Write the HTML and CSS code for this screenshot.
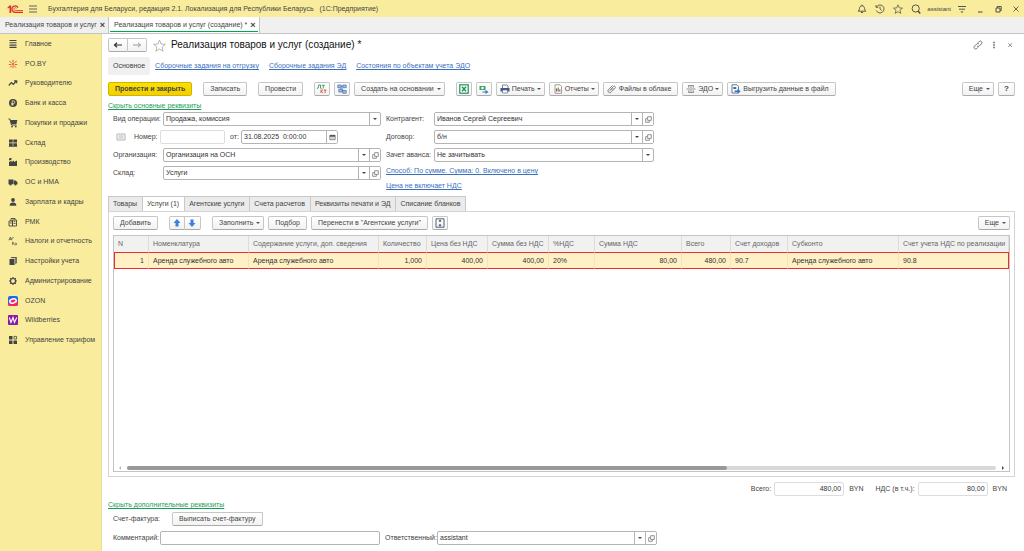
FILE: index.html
```html
<!DOCTYPE html>
<html lang="ru">
<head>
  <meta charset="UTF-8" />
  <meta name="viewport" content="width=device-width, initial-scale=1" />
  <title>Реализация товаров и услуг (создание)</title>
  <link rel="stylesheet" href="styles.css">
</head>
<body>
  <!-- shared icons -->
  <svg class="sprite" aria-hidden="true">
    <symbol id="i-open" viewBox="0 0 8 8"><path d="M3 .8h4.200V5H3zM2.500 3H.8v4.200H5V5.500" fill="none" stroke="#666" stroke-width=".8"/></symbol>
    <symbol id="i-star" viewBox="0 0 24 24"><path d="M12 2l3 7.300 7.800.6-6 5 1.900 7.600L12 18.400l-6.700 4.100 1.900-7.600-6-5 7.800-.6z" fill="none" stroke="currentColor" stroke-width="1.600" stroke-linejoin="round"/></symbol>
  </svg>

  <header class="titlebar">
    <svg class="logo" viewBox="0 0 16 8" aria-hidden="true">
      <path d="M.3 2.700L2.600.5h1.600V8H2.500V2.600L.9 3.600z" fill="#dc2f2b"/>
      <path d="M11 2.600A3.200 3.200 0 1 0 8.300 7.300H16" fill="none" stroke="#dc2f2b" stroke-width="1.300"/>
      <path d="M9.600 3.300A1.400 1.400 0 1 0 8.400 5.500H16" fill="none" stroke="#dc2f2b" stroke-width=".8"/>
    </svg>
    <button class="plain" aria-label="Меню"><svg viewBox="0 0 10 10"><path d="M1 2h8M1 5h8M1 8h8" stroke="#555" stroke-width=".9"/></svg></button>
    <span class="app-name">Бухгалтерия для Беларуси, редакция 2.1. Локализация для Республики Беларусь &nbsp; (1С:Предприятие)</span>
    <div class="title-tools">
      <div class="tool-set">
        <button class="plain" aria-label="Уведомления"><svg viewBox="0 0 10 10"><path d="M1.200 7.200h7.600C7.500 6 7.800 5 7.300 3.500 7 2.200 6 1.800 5 1.800S3 2.200 2.700 3.500C2.200 5 2.500 6 1.200 7.200zM5 .8v1M4 8.500h2" fill="none" stroke="#444" stroke-width=".9"/></svg></button>
        <button class="plain" aria-label="История"><svg viewBox="0 0 10 10"><path d="M1.500 3A4 4 0 1 1 1.300 6.500M1 1v2.300h2.300M5 2.500V5l1.800 1.500" fill="none" stroke="#444" stroke-width=".8"/></svg></button>
        <button class="plain" aria-label="Избранное"><svg><use href="#i-star"/></svg></button>
        <button class="plain" aria-label="Поиск"><svg viewBox="0 0 10 10"><circle cx="4.700" cy="4.500" r="3.600" fill="none" stroke="#444" stroke-width=".9"/><path d="M7 7l2.300 2.500" stroke="#444" stroke-width="1.300"/></svg></button>
      </div>
      <span class="user">assistant</span>
      <div class="tool-set">
        <button class="plain" aria-label="Настройки"><svg viewBox="0 0 10 10"><path d="M1 2.500h8M2 5.200h6" stroke="#444" stroke-width=".9"/><path d="M3.500 7.500h3L5 9z" fill="#444"/></svg></button>
        <button class="plain" aria-label="Свернуть"><svg viewBox="0 0 10 10"><path d="M3 8h4.500" stroke="#444"/></svg></button>
        <button class="plain" aria-label="Восстановить"><svg viewBox="0 0 10 10"><path d="M3 4h4v4H3zM4.200 4V2.500h4v4H7" fill="none" stroke="#444" stroke-width=".9"/></svg></button>
        <button class="plain" aria-label="Выход"><svg viewBox="0 0 10 10"><path d="M2.500 2.500l5 5m0-5l-5 5" stroke="#444" stroke-width=".8"/></svg></button>
      </div>
    </div>
  </header>

  <nav class="windows">
    <a href="#" class="win">Реализация товаров и услуг <b>×</b></a>
    <a href="#" class="win active">Реализация товаров и услуг (создание) * <b>×</b></a>
  </nav>

  <div class="workspace">
    <nav class="sidebar">
      <div class="sections">
        <a href="#"><svg viewBox="0 0 10 10"><path d="M1.500 1.500h7M1.500 3.800h7M1.500 6.100h7M1.500 8.400h7" stroke="#444" stroke-width="1.100"/></svg>Главное</a>
        <a href="#"><svg viewBox="0 0 10 10"><path d="M5 .8v2.700M5 6.500v2.700M1.300 2.200l2.300 1.600M8.700 2.200L6.400 3.800M.8 5.500h2.500M9.200 5.500H6.700M2 8.600l1.800-2M8 8.600l-1.800-2" stroke="#e0492f" stroke-width=".9"/><circle cx="5" cy="5" r="1" fill="#e0492f"/></svg>PO.BY</a>
        <a href="#"><svg viewBox="0 0 10 10"><path d="M.8 7.500l2.500-3 2 1.800 3-3.300M6 2.800h2.700v2.500" fill="none" stroke="#444" stroke-width="1.200"/></svg>Руководителю</a>
        <a href="#"><svg viewBox="0 0 10 10"><circle cx="5" cy="5" r="4" fill="#444"/><path d="M4.200 7.800V2.900h1.300a1.300 1.300 0 0 1 0 2.700H3.200M3.200 6.700h2.500" fill="none" stroke="#f9ec9c" stroke-width=".8"/></svg>Банк и касса</a>
        <a href="#"><svg viewBox="0 0 10 10"><path d="M.5 1h1.400l1.600 6h5" fill="none" stroke="#444"/><path d="M2.300 2h7L8.500 6H3.400z" fill="#444"/><circle cx="4" cy="8.600" r=".9" fill="#444"/><circle cx="7.800" cy="8.600" r=".9" fill="#444"/></svg>Покупки и продажи</a>
        <a href="#"><svg viewBox="0 0 10 10"><path d="M1 1.500h3.700v3H1zM5.300 1.500H9v3H5.300zM1 5.200h3.700V8H1zM5.300 5.200H9V8H5.300zM.8 8.300h8.400v.8H.8z" fill="#444"/></svg>Склад</a>
        <a href="#"><svg viewBox="0 0 10 10"><path d="M1 9V5l2.500-1.500V5L6 3.500V5l3-1.500V9zM1 1.500l2.500-.7v2L1 3.500z" fill="#444"/></svg>Производство</a>
        <a href="#"><svg viewBox="0 0 10 10"><path d="M.5 2.500h5v4.700h-5zM5.900 3.500h2l1.600 1.900v1.800H5.900z" fill="#444"/><circle cx="2.500" cy="7.500" r="1.100" fill="#444"/><circle cx="7.500" cy="7.500" r="1.100" fill="#444"/></svg>ОС и НМА</a>
        <a href="#"><svg viewBox="0 0 10 10"><circle cx="5" cy="3" r="1.900" fill="#444"/><path d="M1.700 8.800c0-2.200 1-3.300 3.300-3.300s3.300 1.100 3.300 3.300z" fill="#444"/></svg>Зарплата и кадры</a>
        <a href="#"><svg viewBox="0 0 10 10"><path d="M1 4h3.500v5H1zM4.500 3h4v6h-4zM3 4V1.500h4V3" fill="none" stroke="#444" stroke-width=".9"/><path d="M5.500 4.700h2M5.500 6.500h2M1.800 6h2" stroke="#444" stroke-width=".8"/></svg>РМК</a>
        <a href="#"><svg viewBox="0 0 10 10"><path d="M.8 4.300L2.300 1l1 3.300M1.200 3.300h2M3.800 4V2l2-.5M4.500 5.800v3M4.500 7.500L6 6.200M5 7.500l1.600 1.300" fill="none" stroke="#555" stroke-width=".7"/><circle cx="7.800" cy="8" r=".9" fill="none" stroke="#555" stroke-width=".7"/></svg>Налоги и отчетность</a>
        <a href="#"><svg viewBox="0 0 10 10"><path d="M1.500 3l5-.3V9h-5z" fill="#444"/><path d="M2.500 2l1-1h5.300v6L7.300 8.500V2z" fill="#555"/></svg>Настройки учета</a>
        <a href="#"><svg viewBox="0 0 10 10"><circle cx="5" cy="5" r="2.500" fill="none" stroke="#444" stroke-width="1.200"/><path d="M5 1v1.200M5 7.800V9M1 5h1.200M7.800 5H9M2.200 2.200l.9.900M6.900 6.900l.9.900M7.800 2.200l-.9.900M3.100 6.900l-.9.900" stroke="#444" stroke-width="1.200"/></svg>Администрирование</a>
        <a href="#"><svg viewBox="0 0 10 10"><rect width="10" height="10" rx="2" fill="#1769f5"/><path d="M0 7.500L10 5.500V8a2 2 0 0 1-2 2H2a2 2 0 0 1-2-2z" fill="#f8265c"/><ellipse cx="5" cy="5" rx="3.300" ry="2" transform="rotate(-15 5 5)" fill="#f8265c" stroke="#fff" stroke-width="1.500"/></svg>OZON</a>
        <a href="#"><svg viewBox="0 0 10 10"><rect width="10" height="10" rx="1" fill="#8b1aa0"/><path d="M1.300 2.500l1.700 5 2-5 1.500 5 2.200-5" fill="none" stroke="#fff" stroke-width="1.100"/></svg>Wildberries</a>
        <a href="#"><svg viewBox="0 0 10 10"><path d="M1 1h3.500v3.500H1zM1 5.500h3.500V9H1zM5.500 5.500H9V9H5.500z" fill="#444"/><path d="M6 1.400h2.600V4H6z" fill="none" stroke="#444" stroke-width=".8"/></svg>Управление тарифом</a>
      </div>
    </nav>

    <main class="document">
      <div class="doc-head">
        <div class="joined">
          <button class="btn" aria-label="Назад"><svg viewBox="0 0 10 10"><path d="M1.500 5h7.500M4 2.800L1.500 5 4 7.200" fill="none" stroke="#333" stroke-width="1.200"/></svg></button>
          <button class="btn" aria-label="Вперед"><svg viewBox="0 0 10 10"><path d="M1 5h7.500M6 2.800L8.500 5 6 7.200" fill="none" stroke="#999"/></svg></button>
        </div>
        <button class="plain fav" aria-label="В избранное"><svg><use href="#i-star"/></svg></button>
        <h1>Реализация товаров и услуг (создание) *</h1>
        <div class="head-tools">
          <button class="plain" aria-label="Ссылка"><svg viewBox="0 0 10 10"><path d="M4 6a1.600 1.600 0 0 0 2.300 0l2.200-2.200a1.600 1.600 0 0 0-2.300-2.300L5 2.700M6 4a1.600 1.600 0 0 0-2.300 0L1.500 6.200a1.600 1.600 0 0 0 2.300 2.300L5 7.300" fill="none" stroke="#666" stroke-width=".9"/></svg></button>
          <button class="plain" aria-label="Еще"><svg viewBox="0 0 10 10"><path d="M5 1.800v1.400M5 4.300v1.400M5 6.800v1.400" stroke="#555" stroke-width="1.400"/></svg></button>
          <button class="plain" aria-label="Закрыть"><svg viewBox="0 0 10 10"><path d="M3.300 3.300l3.700 3.700m0-3.700L3.300 7" stroke="#777" stroke-width=".8"/></svg></button>
        </div>
      </div>

      <nav class="doc-links">
        <a href="#" class="current">Основное</a>
        <a href="#">Сборочные задания на отгрузку</a>
        <a href="#">Сборочные задания ЭД</a>
        <a href="#">Состояния по объектам учета ЭДО</a>
      </nav>

      <div class="toolbar">
        <button class="btn primary">Провести и закрыть</button>
        <button class="btn">Записать</button>
        <button class="btn">Провести</button>
        <div class="group">
          <button class="btn icon" aria-label="Дт Кт"><svg viewBox="0 0 10 10"><path d="M.5 4.800V4h.6L1.700 1h1.800v3h.7v.8M4.800 1.300h3M6.300 1.300v3.200" fill="none" stroke="#2f9b62" stroke-width=".9"/><path d="M4 5.500V9M6 5.500L4.300 7.200 6.200 9M6.700 6h2.800M8.100 6v3" fill="none" stroke="#e0453a" stroke-width=".9"/></svg></button>
          <button class="btn icon" aria-label="Структура подчиненности"><svg viewBox="0 0 10 10"><path d="M3 4.500l4 3M4 2.500h2M4.500 3.500l1.500 3" stroke="#4c76b5" stroke-width=".8"/><path d="M.8 1h3.400v2.700H.8zM5.800 1h3.400v2.700H5.800zM1.800 5.300h3.400V8H1.800zM5.800 6.500h3.400v2.700H5.800z" fill="#a9c1e6" stroke="#4c76b5" stroke-width=".8"/></svg></button>
          <button class="btn drop">Создать на основании <i class="caret"></i></button>
        </div>
        <div class="group">
          <button class="btn icon" aria-label="Excel"><svg viewBox="0 0 10 10"><rect x=".8" y=".8" width="8.400" height="8.400" fill="#fff" stroke="#1f9254" stroke-width="1.200"/><path d="M3 2.700l4 4.600m0-4.600L3 7.300" stroke="#1f9254" stroke-width="1.400"/></svg></button>
          <button class="btn icon" aria-label="Отправить"><svg viewBox="0 0 10 10"><path d="M.5 2h6v4h-6z" fill="#3ba06b"/><circle cx="3.500" cy="4" r="1.300" fill="#fff"/><path d="M3.500 7.500h3V5.700l3 2.300-3 2V8.500h-3z" fill="#3579c8"/></svg></button>
          <button class="btn lead drop"><svg viewBox="0 0 10 10"><path d="M2.500 1h4.500l1 1v2.500h-5.500z" fill="#fff" stroke="#5a6a8c" stroke-width=".8"/><path d="M.5 4h9v3.500h-9z" fill="#415786"/><path d="M2.500 6h5v3h-5z" fill="#fff" stroke="#5a6a8c" stroke-width=".7"/></svg>Печать <i class="caret"></i></button>
          <button class="btn lead drop"><svg viewBox="0 0 10 10"><path d="M2 .8h5l1.500 1.500v7H2z" fill="#fff" stroke="#888" stroke-width=".8"/><path d="M3.500 4.500v3M6.800 5.500v2" stroke="#df3b33" stroke-width="1.200"/><path d="M5.200 3.500v4" stroke="#2f9b62" stroke-width="1.200"/></svg>Отчеты <i class="caret"></i></button>
          <button class="btn lead"><svg viewBox="0 0 10 10"><path d="M2.500 6.500l4-4a1.100 1.100 0 0 1 1.600 1.600L4 8.200A1.800 1.800 0 0 1 1.500 5.600l4.200-4.200M4 6.500l2.500-2.500" fill="none" stroke="#666" stroke-width=".8"/></svg>Файлы в облаке</button>
          <button class="btn lead drop"><svg viewBox="0 0 10 10"><path d="M2.500 3.500v-2h5v2M2.500 6.500v2h5v-2M.5 5h9M3.500 3h3M3.500 7h3" fill="none" stroke="#888" stroke-width=".9"/></svg>ЭДО <i class="caret"></i></button>
          <button class="btn lead"><svg viewBox="0 0 10 10"><path d="M1 .8h5l1.500 1.500V9H1z" fill="#fff" stroke="#506a94" stroke-width=".9"/><path d="M2.300 3h3v2h-3z" fill="#506a94"/><path d="M3.500 6.500h3V4.800L9.700 7.300 6.500 9.700V8h-3z" fill="#2d74c9"/></svg>Выгрузить данные в файл</button>
        </div>
        <div class="group end">
          <button class="btn drop">Еще <i class="caret"></i></button>
          <button class="btn help">?</button>
        </div>
      </div>

      <a href="#" class="toggle">Скрыть основные реквизиты</a>

      <form class="fields">
        <div class="field-col">
          <div class="row">
            <label for="operation">Вид операции:</label>
            <div class="field"><select id="operation"><option>Продажа, комиссия</option></select></div>
          </div>
          <div class="row number-row">
            <svg viewBox="0 0 10 10"><path d="M1 2h8v6H1zM2.500 4h5M2.500 6h5" fill="none" stroke="#aaa" stroke-width=".9"/></svg>
            <label for="number">Номер:</label>
            <div class="field pale"><input type="text" id="number"></div>
            <label for="date">от:</label>
            <div class="field date">
              <input type="text" id="date" value="31.08.2025  0:00:00">
              <button type="button" aria-label="Календарь"><svg viewBox="0 0 8 8"><path d="M1 1.500h6v5H1z" fill="none" stroke="#555" stroke-width=".8"/><path d="M1 1h6v2H1z" fill="#555"/><path d="M2 4.500h4" stroke="#555" stroke-width=".6"/></svg></button>
            </div>
          </div>
          <div class="row">
            <label for="org">Организация:</label>
            <div class="field"><select id="org"><option>Организация на ОСН</option></select><button type="button" aria-label="Открыть"><svg><use href="#i-open"/></svg></button></div>
          </div>
          <div class="row">
            <label for="store">Склад:</label>
            <div class="field"><select id="store"><option>Услуги</option></select><button type="button" aria-label="Открыть"><svg><use href="#i-open"/></svg></button></div>
          </div>
        </div>
        <div class="field-col second">
          <div class="row">
            <label for="partner">Контрагент:</label>
            <div class="field"><select id="partner"><option>Иванов Сергей Сергеевич</option></select><button type="button" aria-label="Открыть"><svg><use href="#i-open"/></svg></button></div>
          </div>
          <div class="row">
            <label for="contract">Договор:</label>
            <div class="field"><select id="contract"><option>б/н</option></select><button type="button" aria-label="Открыть"><svg><use href="#i-open"/></svg></button></div>
          </div>
          <div class="row">
            <label for="advance">Зачет аванса:</label>
            <div class="field"><select id="advance"><option>Не зачитывать</option></select></div>
          </div>
          <div class="price-links">
            <a href="#">Способ: По сумме. Сумма: 0. Включено в цену</a>
            <a href="#">Цена не включает НДС</a>
          </div>
        </div>
      </form>

      <div class="tabs">
        <button>Товары</button>
        <button class="active">Услуги (1)</button>
        <button>Агентские услуги</button>
        <button>Счета расчетов</button>
        <button>Реквизиты печати и ЭД</button>
        <button>Списание бланков</button>
      </div>

      <section class="panel">
        <div class="toolbar">
          <button class="btn">Добавить</button>
          <div class="joined arrows">
            <button class="btn" aria-label="Вверх"><svg viewBox="0 0 10 10"><path d="M5 1l3.500 4H6.500v3.500h-3V5h-2z" fill="#3b7fe0"/></svg></button>
            <button class="btn" aria-label="Вниз"><svg viewBox="0 0 10 10"><path d="M5 9L1.500 5h2V1.500h3V5h2z" fill="#3b7fe0"/></svg></button>
          </div>
          <div class="group">
            <button class="btn drop">Заполнить <i class="caret"></i></button>
            <button class="btn">Подбор</button>
            <button class="btn">Перенести в "Агентские услуги"</button>
            <button class="btn icon" aria-label="Высота строк"><svg viewBox="0 0 10 10"><path d="M1 .8h8v8.400H1zM5 2v2.200M5 6v2.200" fill="none" stroke="#44506a" stroke-width=".9"/><path d="M3.500 3.300L5 1.600l1.500 1.700zM3.500 6.700L5 8.400l1.500-1.700z" fill="#44506a"/></svg></button>
          </div>
          <div class="group end">
            <button class="btn drop">Еще <i class="caret"></i></button>
          </div>
        </div>

        <div class="grid-box">
          <table>
            <colgroup>
              <col class="c-n"><col class="c-item"><col class="c-text"><col class="c-qty"><col class="c-price"><col class="c-sum"><col class="c-rate"><col class="c-vat"><col class="c-total"><col class="c-acc"><col class="c-sub"><col>
            </colgroup>
            <thead>
              <tr>
                <th>N</th><th>Номенклатура</th><th>Содержание услуги, доп. сведения</th><th>Количество</th><th>Цена без НДС</th><th>Сумма без НДС</th><th>%НДС</th><th>Сумма НДС</th><th>Всего</th><th>Счет доходов</th><th>Субконто</th><th>Счет учета НДС по реализации</th>
              </tr>
            </thead>
            <tbody>
              <tr>
                <td class="num">1</td><td>Аренда служебного авто</td><td>Аренда служебного авто</td><td class="num">1,000</td><td class="num">400,00</td><td class="num">400,00</td><td>20%</td><td class="num">80,00</td><td class="num">480,00</td><td>90.7</td><td>Аренда служебного авто</td><td>90.8</td>
              </tr>
            </tbody>
          </table>
          <div class="scroll">
            <i class="left"></i>
            <div class="track"><div class="thumb"></div></div>
            <i class="right"></i>
          </div>
        </div>
      </section>

      <div class="totals">
        <label for="total">Всего:</label>
        <div class="field pale"><input type="text" id="total" value="480,00" readonly></div>
        <span>BYN</span>
        <label for="vat" class="vat-label">НДС (в т.ч.):</label>
        <div class="field pale"><input type="text" id="vat" value="80,00" readonly></div>
        <span>BYN</span>
      </div>

      <a href="#" class="toggle">Скрыть дополнительные реквизиты</a>

      <div class="row invoice-row">
        <span>Счет-фактура:</span>
        <button class="btn">Выписать счет-фактуру</button>
      </div>
      <div class="row footer-row">
        <label for="comment">Комментарий:</label>
        <div class="field"><input type="text" id="comment"></div>
        <label for="manager" class="manager-label">Ответственный:</label>
        <div class="field"><select id="manager"><option>assistant</option></select><button type="button" aria-label="Открыть"><svg><use href="#i-open"/></svg></button></div>
      </div>
    </main>
  </div>
</body>
</html>
```
FILE: styles.css
```css
* {
  box-sizing: border-box;
}

body {
  margin: 0;
  min-height: 100vh;
  display: flex;
  flex-direction: column;
  font: 7px/10px "Liberation Sans", Arial, sans-serif;
  color: #444;
  background: #fff;
}

button, input, select {
  font: inherit;
  color: inherit;
  margin: 0;
}

button {
  cursor: pointer;
}

svg {
  display: block;
  width: 10px;
  height: 10px;
  flex: none;
}

.sprite {
  position: absolute;
  width: 0;
  height: 0;
}

.plain {
  border: 0;
  padding: 0;
  background: none;
}

/* top bar */
.titlebar {
  display: flex;
  align-items: center;
  height: 17px;
  padding: 0 3px 0 7px;
  background: #f9ec9c;
}

.logo {
  width: 16px;
  height: 8px;
  margin-right: 5px;
}

.app-name {
  margin-left: 10px;
}

.title-tools {
  display: flex;
  align-items: center;
  gap: 6px;
  margin-left: auto;
}

.tool-set {
  display: flex;
  gap: 8px;
}

.user {
  font-size: 6px;
}

.windows {
  display: flex;
  height: 17px;
  background: #f0f0f0;
  border-bottom: 1px solid #c4c4c4;
}

.win {
  display: flex;
  align-items: center;
  gap: 3px;
  padding: 0 3px 0 5px;
  color: #444;
  text-decoration: none;
  border-right: 1px solid #c4c4c4;
}

.win b {
  font-size: 9px;
}

.win.active {
  background: linear-gradient(#00a650, #00a650) center bottom 1px / calc(100% - 2px) 1px no-repeat #fff;
}

.workspace {
  flex: 1;
  display: flex;
}

.sidebar {
  flex: none;
  width: 102px;
  background: #f9ec9c;
  border-right: 1px solid #eadf9a;
}

.sections {
  display: grid;
  grid-auto-rows: 1fr;
  height: 316px;
}

.sections a {
  display: flex;
  align-items: center;
  gap: 7px;
  padding-left: 8px;
  color: #444;
  text-decoration: none;
}

.document {
  flex: 1;
  min-width: 0;
  display: flex;
  flex-direction: column;
  padding: 4px 9px 6px 6px;
}

.document a {
  color: #3a6fc0;
}

.doc-head {
  display: flex;
  align-items: center;
  height: 14px;
}

.doc-head h1 {
  margin: 0 0 0 5px;
  font-size: 10px;
  font-weight: normal;
  color: #111;
}

.fav {
  margin-left: 6px;
  color: #aaa;
}

.fav svg {
  width: 13px;
  height: 13px;
}

.head-tools {
  display: flex;
  gap: 6px;
  margin-left: auto;
}

.joined {
  display: flex;
}

.doc-links {
  display: flex;
  align-items: center;
  gap: 10px;
  height: 18px;
  margin-top: 5px;
}

.document .doc-links .current {
  align-self: stretch;
  display: flex;
  align-items: center;
  padding: 0 5px;
  margin-right: -5px;
  color: #444;
  background: #f0f0f0;
  border-radius: 2px;
  text-decoration: none;
}

/* buttons */
.btn {
  display: flex;
  align-items: center;
  justify-content: center;
  gap: 3px;
  height: 14px;
  padding: 0 6px;
  white-space: nowrap;
  background: linear-gradient(#fff, #f2f2f2);
  border: 1px solid #c6c6c6;
  border-bottom-color: #aaa;
  border-radius: 2px;
}

.btn.drop {
  padding-right: 3px;
}

.btn.lead {
  padding-left: 3px;
  gap: 2px;
}

.btn.icon {
  width: 16px;
  padding: 0;
}

.btn.help {
  width: 17px;
  padding: 0;
  font-size: 8px;
  font-weight: bold;
}

.btn.primary {
  font-weight: bold;
  background: linear-gradient(#fbe100, #f2ce00);
  border-color: #d0b400;
}

.joined .btn {
  width: 20px;
  padding: 0;
}

.joined .btn:first-child {
  border-radius: 2px 0 0 2px;
}

.joined .btn:last-child {
  width: 19px;
  border-left: 0;
  border-radius: 0 2px 2px 0;
}

.joined.arrows .btn {
  width: 16px;
}

.caret {
  border: 2px solid transparent;
  border-top-color: #555;
  border-bottom: 0;
}

.toolbar {
  display: flex;
  gap: 11px;
}

.doc-links + .toolbar {
  margin-top: 7px;
}

.group {
  display: flex;
  gap: 4px;
}

.end {
  margin-left: auto;
}

.document .toggle {
  align-self: flex-start;
  color: #1c9c57;
}

.toolbar + .toggle {
  margin-top: 5px;
}

/* form fields */
.fields {
  display: flex;
  gap: 5px;
  max-width: 546px;
  padding-left: 5px;
  margin-top: 1px;
}

.field-col {
  flex: 1;
  display: flex;
  flex-direction: column;
  gap: 4px;
}

.row {
  display: flex;
  align-items: center;
}

.field-col .row > label:first-child {
  width: 50px;
}

.field-col.second .row > label:first-child {
  width: 48px;
}

.field {
  flex: 1;
  min-width: 0;
  display: flex;
  height: 14px;
  border: 1px solid #b4b4b4;
  border-radius: 2px;
  background: #fff;
  overflow: hidden;
}

.field.pale {
  border-color: #ddd;
}

.field input,
.field select {
  flex: 1;
  min-width: 0;
  width: 100%;
  border: 0;
  padding: 0 2px;
  background: transparent;
  color: #333;
  white-space: pre;
}

.field select {
  appearance: none;
  background:
    url("data:image/svg+xml,%3Csvg xmlns='http://www.w3.org/2000/svg' width='11' height='12'%3E%3Cpath d='M.5 0v12' stroke='%23b4b4b4'/%3E%3Cpath d='M4 5h4L6 7z' fill='%23444'/%3E%3C/svg%3E") right center no-repeat;
}

.field button {
  flex: none;
  width: 11px;
  display: flex;
  align-items: center;
  justify-content: center;
  padding: 0;
  border: 0;
  border-left: 1px solid #b4b4b4;
  background: #fff;
}

.field button svg {
  width: 7px;
  height: 7px;
}

.number-row {
  padding-left: 3px;
}

.number-row svg {
  margin-right: 8px;
}

.number-row > label {
  width: 26px;
}

.number-row > .pale + label {
  width: 16px;
  padding-left: 5px;
}

.number-row .field {
  flex: none;
  width: 65px;
}

.number-row .field.date {
  width: 97px;
}

.number-row .date svg {
  margin: 0;
}

.price-links {
  display: flex;
  flex-direction: column;
  align-items: flex-start;
  gap: 5px;
}

/* tabs and table part */
.tabs {
  display: flex;
  margin-top: 5px;
}

.tabs button {
  height: 15px;
  padding: 0 5px 0 4px;
  background: #ebebeb;
  border: 1px solid #c8c8c8;
  border-bottom: 0;
  margin-right: -1px;
}

.tabs .active {
  background: #fff;
}

.panel {
  flex: 1;
  display: flex;
  flex-direction: column;
  gap: 5px;
  padding: 4px;
  border: 1px solid #d4d4d4;
}

.grid-box {
  flex: 1;
  display: flex;
  flex-direction: column;
  border: 1px solid #c4c4c4;
}

table {
  width: 100%;
  table-layout: fixed;
  border-collapse: separate;
  border-spacing: 0;
}

th, td {
  padding: 0 4px;
  overflow: hidden;
  text-align: left;
  white-space: nowrap;
  font-weight: normal;
}

th {
  height: 16px;
  color: #666;
  background: #f1f1f1;
  border-right: 1px solid #dcdcdc;
}

td {
  height: 17px;
  color: #333;
  background: #fff1c5;
  border-top: 1px solid #ee2b2b;
  border-bottom: 1px solid #ee2b2b;
  border-right: 1px solid #f3e6ba;
}

td:first-child {
  border-left: 1px solid #ee2b2b;
}

td:last-child {
  border-right-color: #ee2b2b;
}

.num {
  text-align: right;
}

.c-n { width: 35px; }
.c-item { width: 100px; }
.c-text { width: 130px; }
.c-qty { width: 48px; }
.c-price { width: 61px; }
.c-sum { width: 61px; }
.c-rate { width: 46px; }
.c-vat { width: 87px; }
.c-total { width: 49px; }
.c-acc { width: 57px; }
.c-sub { width: 111px; }

.scroll {
  display: flex;
  align-items: center;
  gap: 6px;
  margin-top: auto;
  padding: 1px 5px;
}

.scroll i {
  border: 2px solid transparent;
}

.scroll .left {
  border-right-color: #bbb;
  border-left: 0;
}

.scroll .right {
  border-left-color: #444;
  border-right: 0;
}

.track {
  flex: 1;
  height: 4px;
  border-radius: 2px;
  background: #d8d8d8;
}

.thumb {
  width: 69%;
  height: 4px;
  border-radius: 2px;
  background: #999;
}

/* bottom part */
.totals {
  display: flex;
  align-items: center;
  justify-content: flex-end;
  margin: 5px 8px 4px 0;
}

.totals .field {
  flex: none;
  width: 70px;
  margin: 0 5px 0 3px;
}

.totals input {
  text-align: right;
}

.vat-label {
  margin-left: 12px;
}

.invoice-row {
  margin: 2px 0 5px;
  padding-left: 5px;
}

.invoice-row span {
  width: 59px;
}

.footer-row {
  max-width: 549px;
  padding-left: 5px;
}

.footer-row label {
  width: 47px;
}

.footer-row .manager-label {
  width: 57px;
  padding-left: 5px;
}
```
